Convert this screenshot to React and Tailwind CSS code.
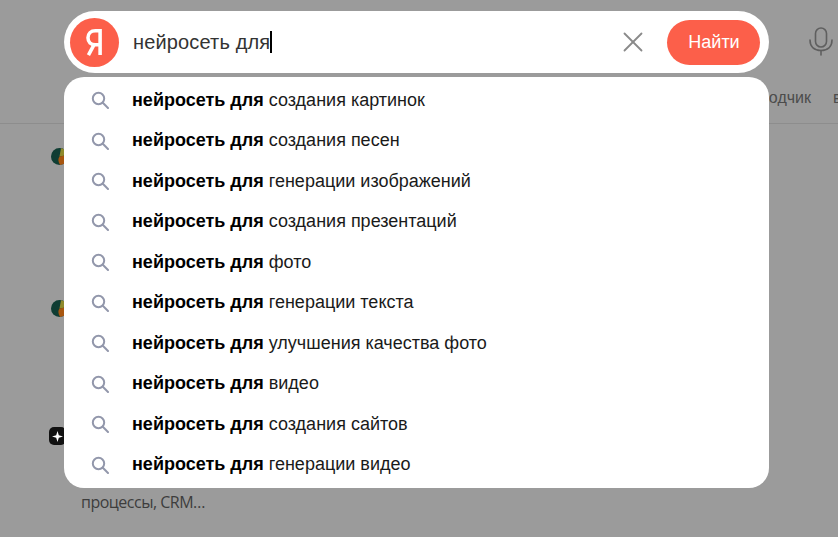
import { X } from 'lucide-react';

const suggestions = [
  'создания картинок',
  'создания песен',
  'генерации изображений',
  'создания презентаций',
  'фото',
  'генерации текста',
  'улучшения качества фото',
  'видео',
  'создания сайтов',
  'генерации видео',
];

function SearchIcon() {
  return (
    <svg width="18" height="18" viewBox="0 0 18 18" fill="none" stroke="#9297ab" strokeWidth="2" className="shrink-0">
      <circle cx="7.5" cy="7.5" r="5.7" />
      <path d="M11.8 11.8 L17 17" strokeLinecap="round" />
    </svg>
  );
}

function Suggestion({ text }) {
  return (
    <div className="flex items-center h-[40.5px] pl-[27px]">
      <SearchIcon />
      <span className="ml-[23px] text-[18px] text-[#1a1a1a] whitespace-nowrap">
        <b className="font-bold text-black">нейросеть для</b> {text}
      </span>
    </div>
  );
}

function PageDot({ top }) {
  return (
    <svg width="17" height="17" viewBox="0 0 17 17" className={`absolute left-[51px] ${top}`}>
      <circle cx="8.5" cy="8.5" r="8.5" fill="#0f3d33" />
      <path d="M8.5 8.5 L10 0.2 A8.5 8.5 0 0 1 17 7 Z" fill="#8f8a2c" />
      <path d="M17 7 A8.5 8.5 0 0 1 9 17 Q6 12 8.5 8.5 Z" fill="#a8560f" />
    </svg>
  );
}

function MicIcon() {
  return (
    <svg width="24" height="29" viewBox="0 0 24 29" fill="none" stroke="#5f5f5f" strokeWidth="1.6" strokeLinecap="round">
      <rect x="6.5" y="1" width="11" height="19" rx="5.5" />
      <path d="M1 13 C1 20 5.5 23.5 12 23.5 C18.5 23.5 23 20 23 13" />
      <path d="M12 23.5 V28" />
    </svg>
  );
}

export default function App() {
  return (
    <div className="relative w-[838px] h-[537px] overflow-hidden bg-[#9b9b9b] font-['Liberation_Sans',Arial,sans-serif]">
      {/* dimmed page behind the suggest */}
      <div className="h-[124px] border-b border-[#8d8d8d]">
        <div className="flex justify-end pt-[27px] pr-[5px]">
          <MicIcon />
        </div>
        <div className="flex justify-end gap-[22px] pt-[33px] text-[16px] leading-[18px] text-[#4c4c4c] whitespace-nowrap">
          <span>одчик</span>
          <span className="w-[5px]">в</span>
        </div>
      </div>
      <PageDot top="top-[148px]" />
      <PageDot top="top-[300px]" />
      <div className="absolute left-[49px] top-[427px] w-[17px] h-[18px] rounded-[5px] bg-[#111] flex items-center justify-center">
        <svg width="11" height="11" viewBox="0 0 11 11" fill="#fff">
          <path d="M5.5 0 L6.8 4.2 L11 5.5 L6.8 6.8 L5.5 11 L4.2 6.8 L0 5.5 L4.2 4.2 Z" />
        </svg>
      </div>
      <div className="absolute left-[81px] top-[492px] text-[16px] leading-[20px] font-['Open_Sans',sans-serif] text-[#3d3d3d] tracking-[-0.5px]">процессы, CRM…</div>

      {/* search box with dropdown */}
      <div className="absolute left-[64px] top-[11px] w-[705px] flex flex-col gap-1">
        <div className="flex items-center h-[62px] rounded-[31px] bg-white pl-[6px] pr-[9px]">
          <div className="w-[49px] h-[49px] rounded-full bg-[#fc5f4a] flex items-center justify-center shrink-0">
            <svg width="19" height="28" viewBox="0 0 20 30" fill="none" stroke="#fff" strokeWidth="3.8">
              <path d="M16 29 V3 H11 C6 3 3 6 3 10.5 C3 15 6 18 11 18 H16" />
              <path d="M10 17 L3.5 29" />
            </svg>
          </div>
          <div className="ml-[14px] flex-1 flex items-center text-[20px] tracking-[0.15px] text-[#333]">
            <span>нейросеть для</span>
            <span className="w-[2px] h-[22px] bg-black" />
          </div>
          <X size={34} strokeWidth={1.3} className="text-[#8a8a8a] mr-[17px]" />
          <div className="w-[93px] h-[45px] rounded-[23px] bg-[#fc5f4a] text-white text-[18px] pl-[1px] flex items-center justify-center">
            Найти
          </div>
        </div>
        <div className="h-[411px] rounded-[20px] bg-white pt-[3px]">
          {suggestions.map(s => (
            <Suggestion key={s} text={s} />
          ))}
        </div>
      </div>
    </div>
  );
}
